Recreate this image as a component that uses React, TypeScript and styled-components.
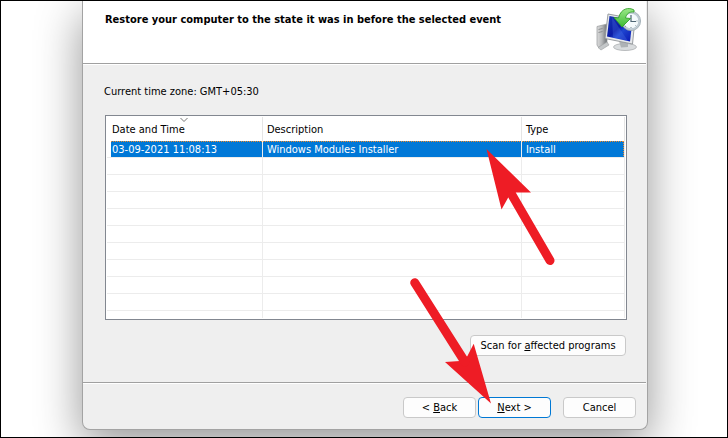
import React from 'react';
import styled, { createGlobalStyle, css } from 'styled-components';

const GlobalStyle = createGlobalStyle`
  *, *::before, *::after { box-sizing: border-box; }
  body {
    margin: 0;
    background: #fff;
    color: #000;
    font: 11px/16px "DejaVu Sans Condensed", "Liberation Sans", sans-serif;
  }
`;

const Desktop = styled.div`
  min-height: 100vh;
  padding: 0 79px 7px 81px;
  border: 1px solid #000;
  overflow: hidden;
`;

const Dialog = styled.main`
  position: relative;
  background: #efefef;
  border: 1px solid #a3a3a3;
  border-top: 0;
  border-radius: 0 0 8px 8px;
  box-shadow: 0 14px 46px rgba(0, 0, 0, 0.42);
`;

const Header = styled.header`
  display: flex;
  justify-content: space-between;
  align-items: flex-start;
  margin-right: 1px;
  padding: 6px 4px 8px 22px;
  background: #fff;
  border-bottom: 1px solid #a0a0a0;
  box-shadow: 0 1px 0 #fff;
`;

const Title = styled.h1`
  margin: 5px 0 0;
  font-size: 11px;
  line-height: 16px;
  font-weight: bold;
`;

const Content = styled.section`
  display: flex;
  flex-direction: column;
  padding: 20px 20px 26px 21px;
`;

const TimeZone = styled.p`
  margin: 0 0 15px;
`;

const ListBox = styled.div`
  margin: 0 0 15px 1px;
  padding: 1px;
  background: #fff;
  border: 1px solid #828790;
`;

const RestoreTable = styled.table`
  width: 100%;
  table-layout: fixed;
  border-collapse: separate;
  border-spacing: 0;
`;

const Column = styled.col<{ $share?: string }>`
  width: ${(p) => p.$share ?? 'auto'};
`;

const HeadCell = styled.th`
  position: relative;
  padding: 5px 4px 3px;
  border-right: 1px solid #e5e5e5;
  text-align: left;
  font-weight: normal;
  &:first-child { padding-left: 5px; }
`;

const SortMark = styled.svg`
  position: absolute;
  top: 0;
  left: 50%;
  margin-left: -5px;
`;

const Cell = styled.td`
  height: 17px;
  padding: 2px 4px 0;
  border-right: 1px solid #ececec;
  border-bottom: 1px solid #ececec;
  line-height: 14px;
  white-space: nowrap;
  &:first-child { padding-left: 5px; }
`;

const focusDots = 'repeating-linear-gradient(90deg, #f08a28 0 1px, #0078d7 1px 2px) top / 100% 1px no-repeat padding-box';

const Row = styled.tr<{ $selected?: boolean; $last?: boolean }>`
  ${(p) =>
    p.$selected &&
    css`
      color: #fff;
      ${Cell} {
        background: ${focusDots}, #0078d7 padding-box;
      }
      ${Cell}:first-child {
        background: linear-gradient(#fff, #fff) left / 4px 100% no-repeat padding-box,
          ${focusDots}, #0078d7 padding-box;
      }
      ${Cell}:last-child {
        background: repeating-linear-gradient(#f08a28 0 1px, #0078d7 1px 2px) right / 1px 100% no-repeat padding-box,
          ${focusDots}, #0078d7 padding-box;
      }
    `}
  ${(p) =>
    p.$last &&
    css`
      ${Cell} { height: 7px; border-bottom: 0; }
    `}
`;

const Button = styled.button<{ $primary?: boolean; $wide?: boolean }>`
  width: ${(p) => (p.$wide ? '156px' : '73px')};
  height: 21px;
  padding: 1px 0 0;
  background: #fdfdfd;
  border: 1px solid ${(p) => (p.$primary ? '#0078d4' : '#c9c9c9')};
  border-radius: 4px;
  color: #000;
  font: inherit;
  line-height: 18px;
`;

const ScanButton = styled(Button)`
  align-self: flex-end;
  margin-right: 1px;
`;

const Footer = styled.footer`
  display: flex;
  justify-content: flex-end;
  gap: 12px;
  margin-right: 1px;
  padding: 14px 10px 11px;
  border-top: 1px solid #a0a0a0;
  box-shadow: inset 0 1px 0 #fff;
`;

const StepButtons = styled.div`
  display: flex;
  gap: 2px;
`;

const Pointer = styled.svg<{ $left: number; $top: number }>`
  position: absolute;
  left: ${(p) => p.$left}px;
  top: ${(p) => p.$top}px;
  fill: #ee1c25;
  stroke: #ee1c25;
  pointer-events: none;
`;

function RestoreIcon() {
  return (
    <svg width="46" height="48" viewBox="0 0 46 48" aria-hidden="true">
      <defs>
        <linearGradient id="screen" x1="0" y1="0" x2="1" y2="1">
          <stop offset="0" stopColor="#1a36b4" />
          <stop offset="0.45" stopColor="#0a1ba6" />
          <stop offset="0.6" stopColor="#1f45d0" />
          <stop offset="1" stopColor="#0715b0" />
        </linearGradient>
        <linearGradient id="tower" x1="0" y1="0" x2="1" y2="0">
          <stop offset="0" stopColor="#dcdcdc" />
          <stop offset="0.5" stopColor="#b4b6b8" />
          <stop offset="1" stopColor="#6d7174" />
        </linearGradient>
        <linearGradient id="arrow" x1="0" y1="0" x2="0" y2="1">
          <stop offset="0" stopColor="#9be888" />
          <stop offset="1" stopColor="#3cba32" />
        </linearGradient>
      </defs>
      <path d="M1 19.500 11 17v21l-8.500 2.500L1 38z" fill="url(#tower)" stroke="#96999b" strokeWidth="0.7" />
      <path d="M2.500 22.500l4-1M2.500 25.500l4-1" stroke="#7f8284" strokeWidth="0.8" />
      <path d="m2 40.500 9-5.500 2 3-8 5z" fill="#c4c7c9" stroke="#9b9ea0" strokeWidth="0.6" />
      <ellipse cx="29" cy="40" rx="11.500" ry="3.500" fill="#d9dcde" stroke="#a2a5a8" strokeWidth="0.7" />
      <path d="m23 34 9 2v4l-7 .5z" fill="#aeb2b5" />
      <path d="m12 7 27 5-2.500 25L9 31.500z" fill="#e6e8ea" stroke="#909498" strokeWidth="0.9" />
      <path d="m13.500 9 23 4.500L34 34.500 11 29.500z" fill="url(#screen)" />
      <path d="m16 10 8 12 8 12-15-3.500z" fill="#5a82ee" opacity="0.25" />
      <circle cx="35" cy="14" r="9.600" fill="#c2cdd4" stroke="#9aa8b0" strokeWidth="0.8" />
      <circle cx="35" cy="14" r="7.800" fill="#f4fafc" stroke="#b1c2cc" strokeWidth="0.8" />
      <path d="M35 8v6.500h5" fill="none" stroke="#4e6674" strokeWidth="1.200" />
      <path d="M35 20v1M41.500 14h-1M30 19l-.7.700M39.500 18.500l.7.700" stroke="#6c7d89" strokeWidth="0.9" />
      <path d="M38 3C33 0 25 1 22.500 11L18 10.500 26 20l8.500-8.500-5-.5C30.500 7 33 4.500 38 5z" fill="url(#arrow)" stroke="#33a02b" strokeWidth="0.9" strokeLinejoin="round" />
    </svg>
  );
}

const emptyRows = Array.from({ length: 9 }, (_, i) => i);

export default function App() {
  return (
    <>
      <GlobalStyle />
      <Desktop>
        <Dialog>
          <Header>
            <Title>Restore your computer to the state it was in before the selected event</Title>
            <RestoreIcon />
          </Header>
          <Content>
            <TimeZone>Current time zone: GMT+05:30</TimeZone>
            <ListBox>
              <RestoreTable>
                <colgroup>
                  <Column $share="30.1%" />
                  <Column $share="50%" />
                  <Column />
                </colgroup>
                <thead>
                  <tr>
                    <HeadCell scope="col" aria-sort="descending">
                      <SortMark width="10" height="6" viewBox="0 0 10 6" aria-hidden="true">
                        <path d="m1.5 1 3.5 3.5L8.500 1" fill="none" stroke="#777" />
                      </SortMark>
                      Date and Time
                    </HeadCell>
                    <HeadCell scope="col">Description</HeadCell>
                    <HeadCell scope="col">Type</HeadCell>
                  </tr>
                </thead>
                <tbody>
                  <Row $selected aria-selected="true">
                    <Cell>03-09-2021 11:08:13</Cell>
                    <Cell>Windows Modules Installer</Cell>
                    <Cell>Install</Cell>
                  </Row>
                  {emptyRows.map((i) => (
                    <Row key={i}>
                      <Cell />
                      <Cell />
                      <Cell />
                    </Row>
                  ))}
                  <Row $last>
                    <Cell />
                    <Cell />
                    <Cell />
                  </Row>
                </tbody>
              </RestoreTable>
            </ListBox>
            <ScanButton type="button" $wide>
              Scan for <u>a</u>ffected programs
            </ScanButton>
          </Content>
          <Footer>
            <StepButtons>
              <Button type="button">
                &lt; <u>B</u>ack
              </Button>
              <Button type="button" $primary>
                <u>N</u>ext &gt;
              </Button>
            </StepButtons>
            <Button type="button">Cancel</Button>
          </Footer>
          <Pointer $left={397} $top={144} width="80" height="125" viewBox="0 0 80 125" aria-hidden="true">
            <path d="M6.500 4 51 47.500H36L28.500 52 21.500 64.500z" stroke="none" />
            <path d="M32 50 70 115.500" strokeWidth="9" strokeLinecap="round" />
          </Pointer>
          <Pointer $left={322} $top={274} width="90" height="135" viewBox="0 0 90 135" aria-hidden="true">
            <path d="M86 128.500 68.700 68.700 62.300 81.300 55 86 40 87z" stroke="none" />
            <path d="M9.700 7.700 60 87" strokeWidth="9" strokeLinecap="round" />
          </Pointer>
        </Dialog>
      </Desktop>
    </>
  );
}
